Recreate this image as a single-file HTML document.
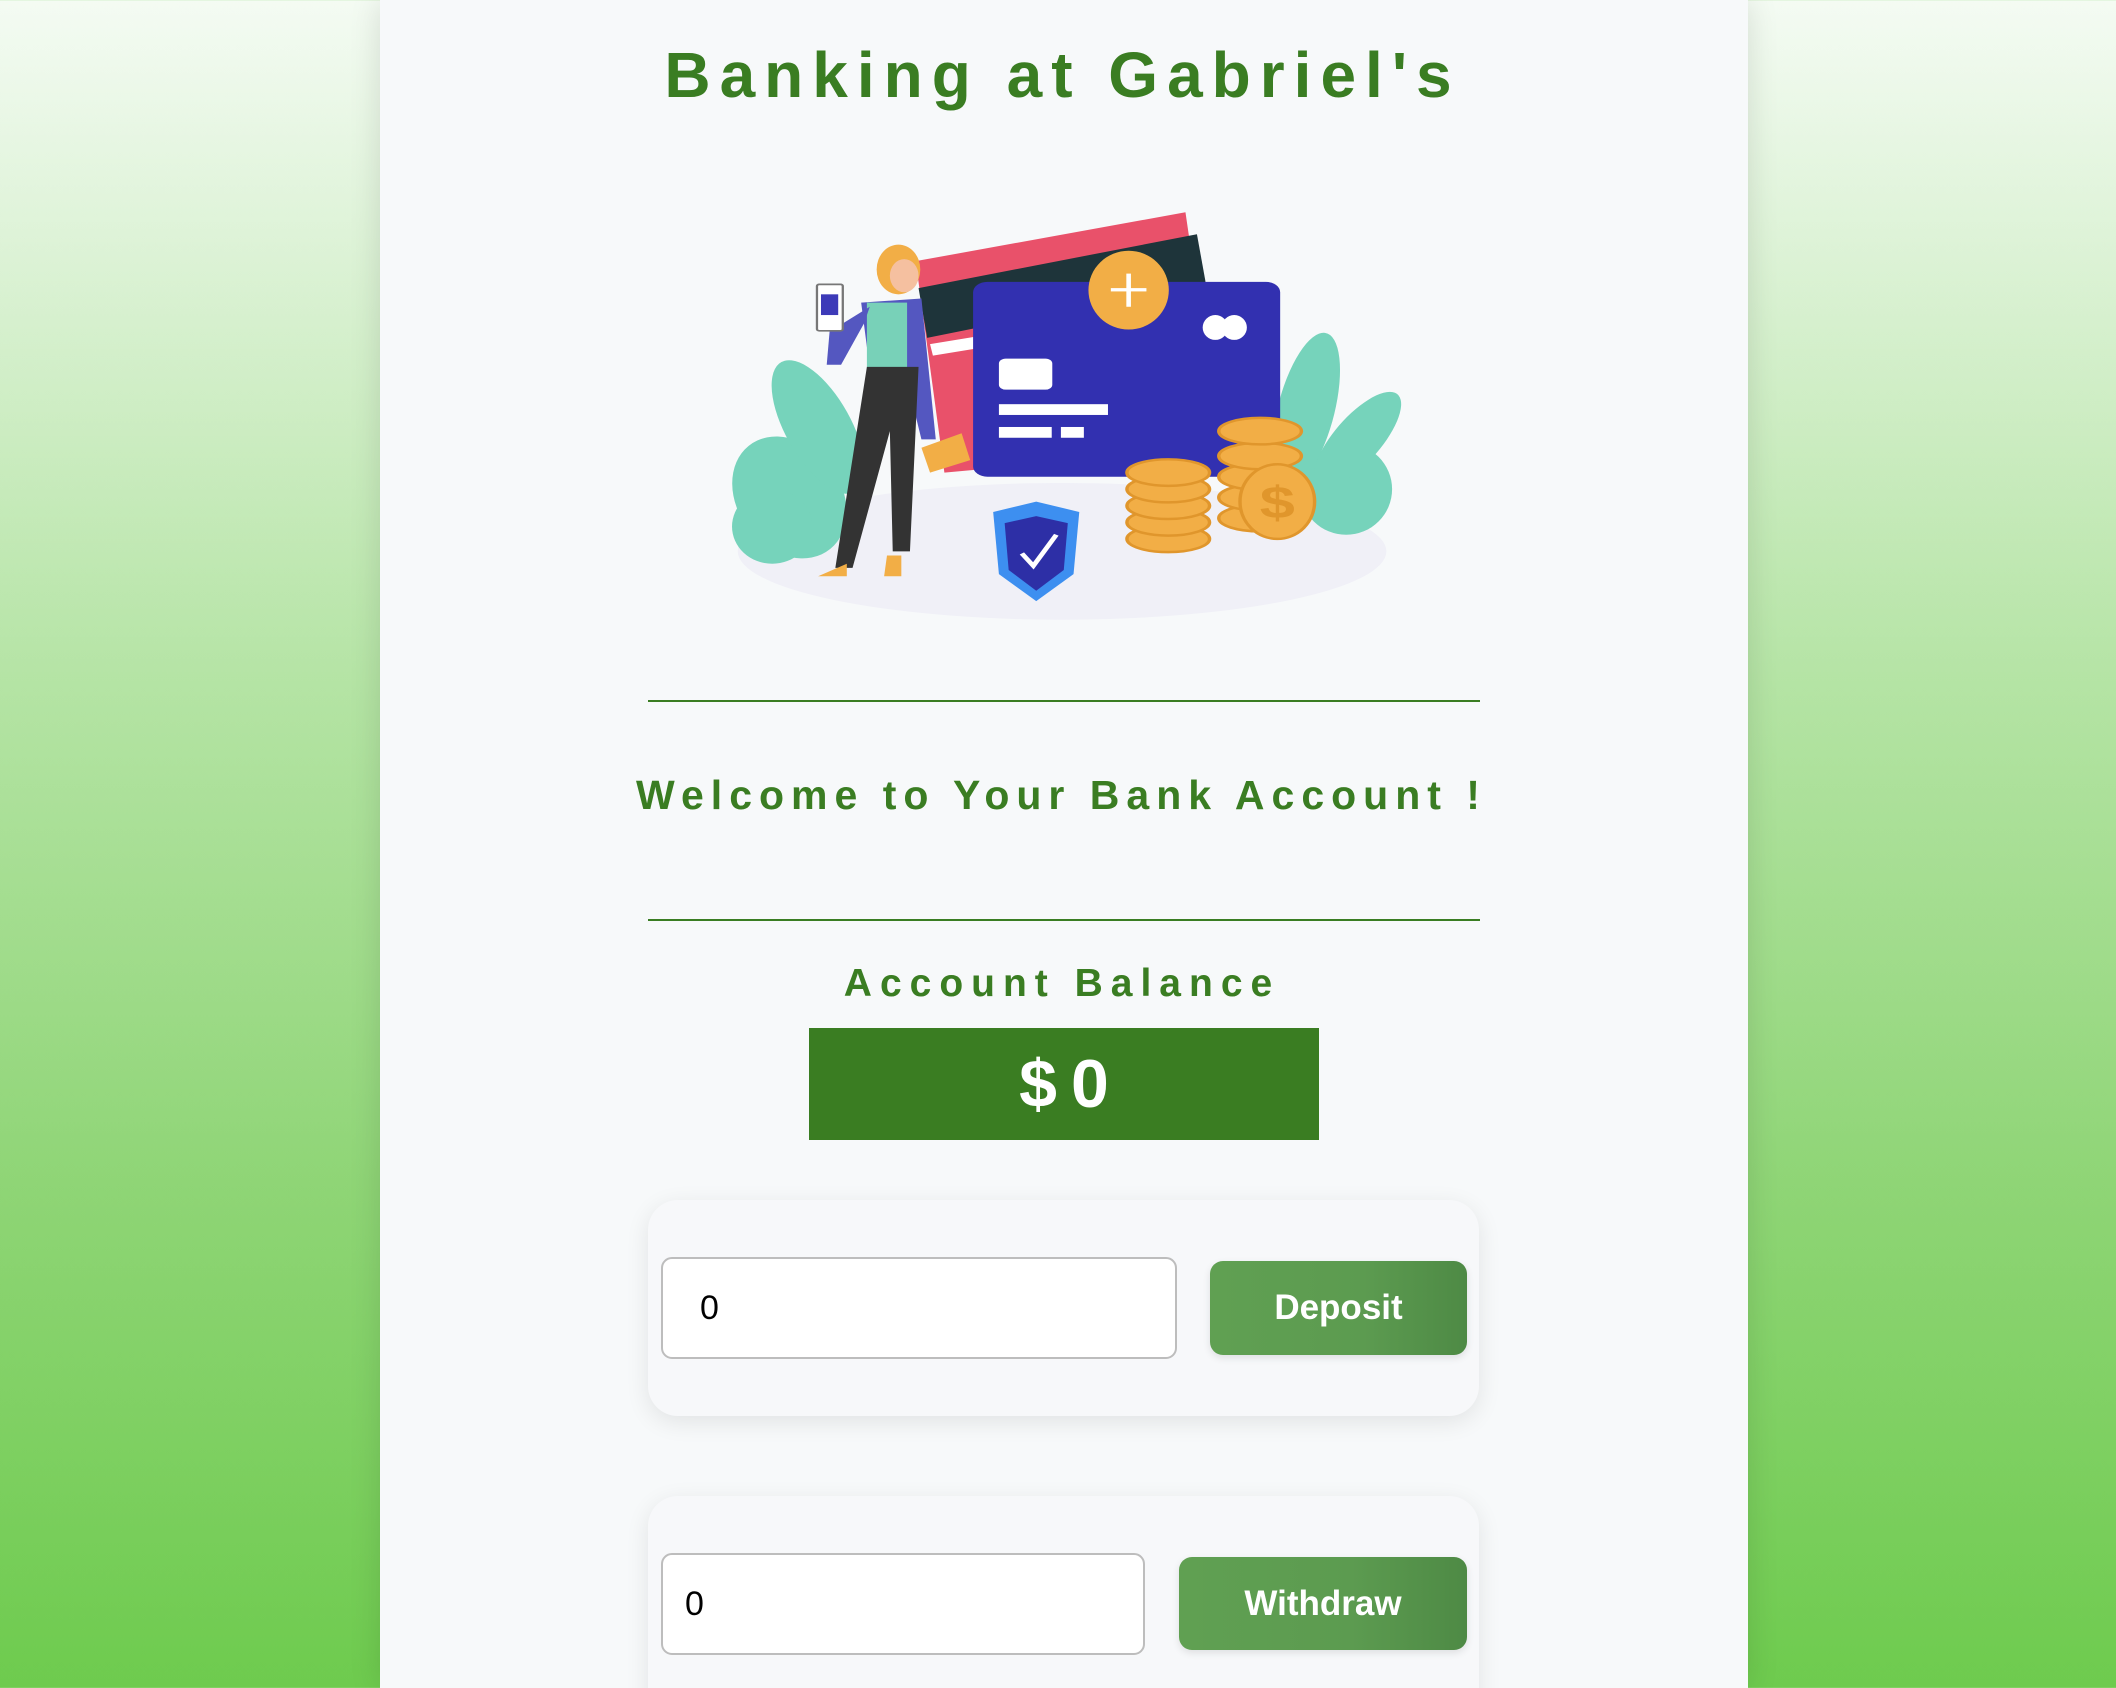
<!DOCTYPE html>
<html><head><meta charset="utf-8"><style>
html,body{margin:0;padding:0;width:2116px;height:1688px;overflow:hidden}
body{background:linear-gradient(to bottom,#f4fbf3 0%,#b5e4a5 40%,#8fd576 70%,#6ecb4e 100%);font-family:"Liberation Sans",sans-serif;position:relative}
.main{position:absolute;left:380px;top:0;width:1368px;height:1688px;background:#f7f9fa;box-shadow:0 0 30px rgba(0,0,0,.12)}
.t{position:absolute;left:0;width:2116px;text-align:center;color:#3a7d22;font-weight:bold;white-space:nowrap}
.hr{position:absolute;left:648px;width:832px;height:2px;background:#3a7d22}
.card{position:absolute;left:648px;width:831px;background:#f7f8fa;border-radius:30px;box-shadow:0 6px 24px rgba(0,0,0,.09)}
.inp{position:absolute;background:#fff;border:2px solid #bdbdbd;border-radius:11px;box-sizing:border-box;font-size:34px;color:#000;display:flex;align-items:center}
.btn{position:absolute;background:linear-gradient(90deg,#60a052 0%,#5c9b50 60%,#4e8a45 100%);border-radius:13px;color:#fff;font-weight:bold;font-size:35px;display:flex;align-items:center;justify-content:center;box-shadow:0 3px 8px rgba(0,0,0,.1)}
</style></head><body>
<div class="main"></div>
<div class="t" style="top:40px;font-size:64px;letter-spacing:9px;line-height:70px;text-indent:9px">Banking at Gabriel's</div>
<svg style="position:absolute;left:600px;top:0" width="900" height="650" viewBox="0 0 1568 1568" preserveAspectRatio="none">
<ellipse cx="805" cy="1330" rx="565" ry="165" fill="#f0f0f7"/>
<g fill="#76d3bb">
<ellipse cx="330" cy="1200" rx="95" ry="150" transform="rotate(-15 330 1200)"/>
<ellipse cx="380" cy="1030" rx="60" ry="170" transform="rotate(-20 380 1030)"/>
<ellipse cx="300" cy="1270" rx="70" ry="90"/>
<ellipse cx="1300" cy="1180" rx="80" ry="110"/>
<ellipse cx="1230" cy="990" rx="50" ry="190" transform="rotate(10 1230 990)"/>
<ellipse cx="1320" cy="1060" rx="45" ry="130" transform="rotate(30 1320 1060)"/>
</g>
<polygon points="550,630 1020,512 1080,1080 600,1140" fill="#e9516a"/>
<polygon points="555,695 1040,565 1055,680 570,815" fill="#1e343a"/>
<polygon points="575,830 1060,720 1063,748 580,858" fill="#fff"/>
<rect x="650" y="680" width="535" height="470" rx="25" fill="#3230b0"/>
<ellipse cx="921" cy="700" rx="70" ry="95" fill="#f2ae46"/>
<rect x="890" y="695" width="62" height="8" fill="#fff"/><rect x="917" y="660" width="8" height="80" fill="#fff"/>
<ellipse cx="1072" cy="790" rx="22" ry="30" fill="#fff"/><ellipse cx="1105" cy="790" rx="22" ry="30" fill="#fff"/>
<rect x="695" y="865" width="93" height="75" rx="12" fill="#fff"/>
<rect x="695" y="975" width="190" height="26" fill="#fff"/>
<rect x="695" y="1030" width="92" height="26" fill="#fff"/><rect x="803" y="1030" width="40" height="26" fill="#fff"/>
<g fill="#f2ae46" stroke="#e0962c" stroke-width="6">
<ellipse cx="990" cy="1300" rx="72" ry="32"/><ellipse cx="990" cy="1260" rx="72" ry="32"/><ellipse cx="990" cy="1220" rx="72" ry="32"/><ellipse cx="990" cy="1180" rx="72" ry="32"/><ellipse cx="990" cy="1140" rx="72" ry="32"/>
<ellipse cx="1150" cy="1250" rx="72" ry="32"/><ellipse cx="1150" cy="1200" rx="72" ry="32"/><ellipse cx="1150" cy="1150" rx="72" ry="32"/><ellipse cx="1150" cy="1100" rx="72" ry="32"/><ellipse cx="1150" cy="1040" rx="72" ry="32"/>
<ellipse cx="1180" cy="1210" rx="65" ry="90"/>
</g>
<text x="1180" y="1250" font-size="110" font-family="Liberation Sans" font-weight="bold" fill="#e0962c" text-anchor="middle">$</text>
<path d="M760 1210 L835 1235 L825 1385 L760 1450 L695 1385 L685 1235 Z" fill="#3d8ff0"/>
<path d="M760 1245 L815 1262 L808 1375 L760 1425 L712 1375 L705 1262 Z" fill="#2d2fa6"/>
<path d="M735 1335 L755 1365 L795 1290" fill="none" stroke="#fff" stroke-width="9"/>
<ellipse cx="520" cy="650" rx="38" ry="60" fill="#f2ae46"/>
<ellipse cx="530" cy="665" rx="25" ry="40" fill="#f5c0a0"/>
<path d="M455 730 L560 720 L585 1060 L560 1060 L530 890 L470 890 Z" fill="#5457c0"/>
<rect x="465" y="730" width="70" height="160" fill="#78d1b8"/>
<polygon points="465,885 555,885 540,1330 510,1330 505,1040 440,1370 410,1370" fill="#333"/>
<polygon points="380,1390 430,1360 430,1390" fill="#f2ae46"/><polygon points="500,1340 525,1340 525,1390 495,1390" fill="#f2ae46"/>
<polygon points="400,800 470,740 460,780 420,880 395,880" fill="#5457c0"/>
<rect x="378" y="686" width="45" height="112" rx="4" fill="#fff" stroke="#777" stroke-width="4"/>
<rect x="385" y="710" width="30" height="50" fill="#3d3ab8"/>
<polygon points="560,1080 630,1045 645,1110 575,1140" fill="#f2ae46"/>
</svg>
<div class="hr" style="top:700px"></div>
<div class="t" style="top:772px;font-size:41px;letter-spacing:7px;line-height:46px;text-indent:7px">Welcome to Your Bank Account !</div>
<div class="hr" style="top:919px"></div>
<div class="t" style="top:962px;font-size:39px;letter-spacing:8px;line-height:44px;text-indent:8px">Account Balance</div>
<div style="position:absolute;left:809px;top:1028px;width:510px;height:112px;background:#3a7d22;color:#fff;font-weight:bold;font-size:68px;display:flex;align-items:center;justify-content:center;letter-spacing:14px;text-indent:14px">$0</div>
<div class="card" style="top:1200px;height:216px"></div>
<div class="inp" style="left:661px;top:1257px;width:516px;height:102px;padding-left:37px">0</div>
<div class="btn" style="left:1210px;top:1261px;width:257px;height:94px">Deposit</div>
<div class="card" style="top:1496px;height:240px"></div>
<div class="inp" style="left:661px;top:1553px;width:484px;height:102px;padding-left:22px">0</div>
<div class="btn" style="left:1179px;top:1557px;width:288px;height:93px">Withdraw</div>
</body></html>
